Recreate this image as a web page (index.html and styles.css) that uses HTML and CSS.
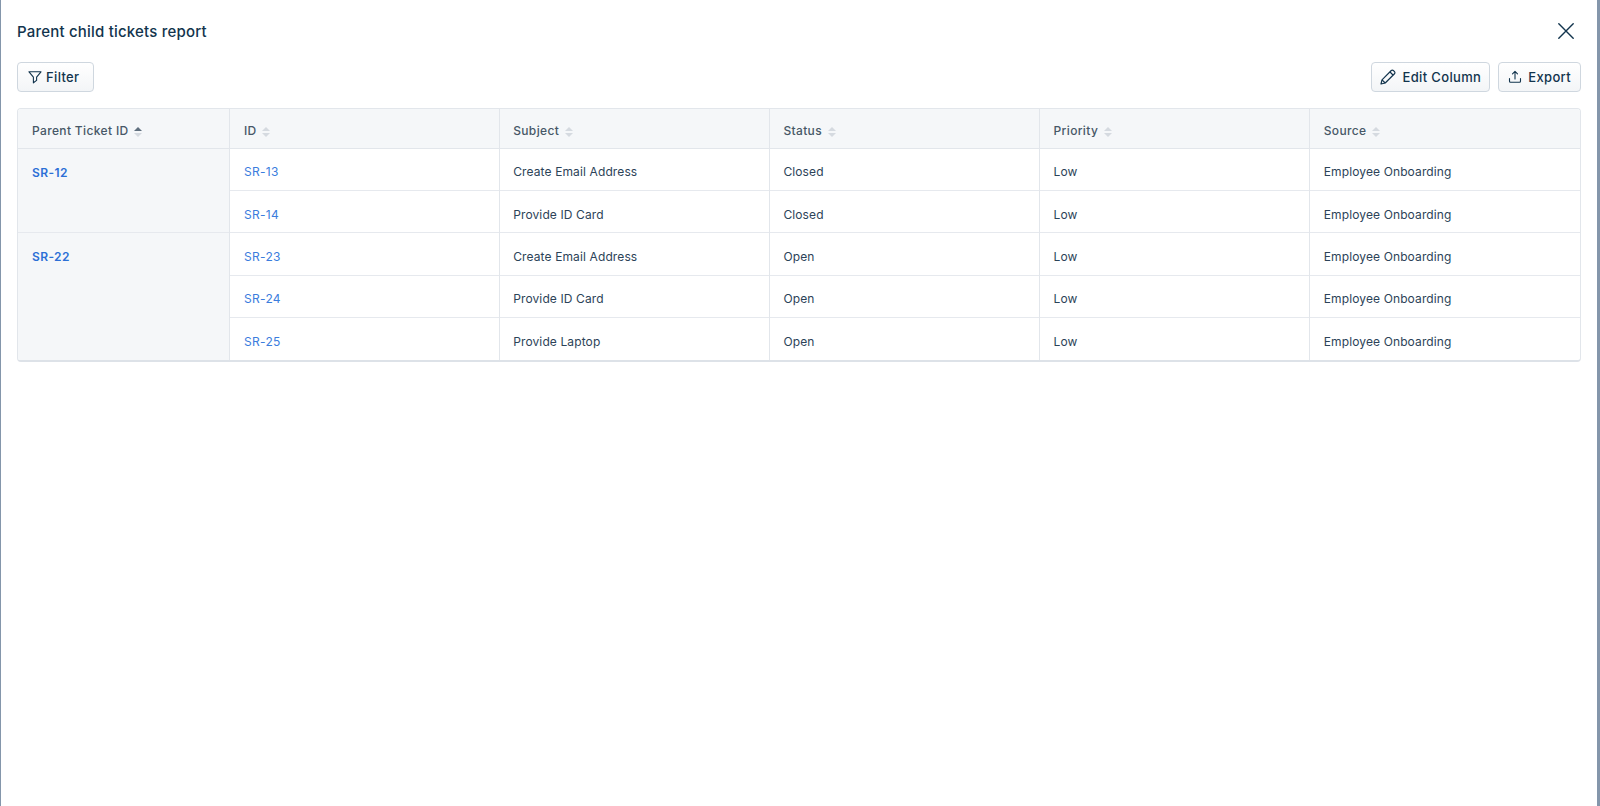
FILE: index.html
```html
<!DOCTYPE html>
<html lang="en">
<head>
<meta charset="utf-8">
<title>Parent child tickets report</title>
<link rel="stylesheet" href="styles.css">
</head>
<body>
<main class="modal">
  <header class="modal-head">
    <h1 class="title">Parent child tickets report</h1>
    <button class="close" aria-label="Close">
      <svg width="16" height="16" viewBox="0 0 16 16" fill="none" stroke="#12344d" stroke-width="1.4" stroke-linecap="round"><path d="M.8.8l14.4 14.4M15.2.8L.8 15.2"/></svg>
    </button>
  </header>
  <div class="toolbar">
    <button class="btn btn-filter">
      <svg width="14" height="14" viewBox="0 0 14 14" fill="none" stroke="#12344d" stroke-width="1.1" stroke-linejoin="round"><path d="M1 1.8h12L8.6 7.2v3.2l-3.2 2.4V7.2z"/></svg>
      Filter
    </button>
    <div class="toolbar-right">
      <button class="btn btn-edit">
        <svg width="16" height="16" viewBox="0 0 16 16" fill="none" stroke="#12344d" stroke-width="1.2" stroke-linejoin="round"><path d="M1 15l1-4.2L11.3 1.5a1.4 1.4 0 0 1 2 0l1.2 1.2a1.4 1.4 0 0 1 0 2L5.2 14z"/><path d="M10 3l3 3M2 10.8L5.2 14"/></svg>
        Edit Column
      </button>
      <button class="btn btn-export">
        <svg width="14" height="14" viewBox="0 0 14 14" fill="none" stroke="#12344d" stroke-width="1.1" stroke-linecap="round" stroke-linejoin="round"><path d="M7 9V1.5M4.5 3.8L7 1.3l2.5 2.5M1.5 8.5v2.8a1 1 0 0 0 1 1h9a1 1 0 0 0 1-1V8.5"/></svg>
        Export
      </button>
    </div>
  </div>
  <div class="table-wrap">
    <table class="report">
      <colgroup>
        <col class="col-parent"><col class="col-rest"><col class="col-rest"><col class="col-rest"><col class="col-rest"><col class="col-rest">
      </colgroup>
      <thead>
        <tr>
          <th class="first">Parent Ticket ID <span class="sort"><i class="up active"></i><i class="down"></i></span></th>
          <th class="id-col">ID <span class="sort"><i class="up"></i><i class="down"></i></span></th>
          <th>Subject <span class="sort"><i class="up"></i><i class="down"></i></span></th>
          <th>Status <span class="sort"><i class="up"></i><i class="down"></i></span></th>
          <th>Priority <span class="sort"><i class="up"></i><i class="down"></i></span></th>
          <th>Source <span class="sort"><i class="up"></i><i class="down"></i></span></th>
        </tr>
      </thead>
      <tbody>
        <tr>
          <td class="parent" rowspan="2"><a class="link strong">SR-12</a></td>
          <td class="id-col"><a class="link">SR-13</a></td><td>Create Email Address</td><td>Closed</td><td>Low</td><td>Employee Onboarding</td>
        </tr>
        <tr>
          <td class="id-col"><a class="link">SR-14</a></td><td>Provide ID Card</td><td>Closed</td><td>Low</td><td>Employee Onboarding</td>
        </tr>
        <tr>
          <td class="parent" rowspan="3"><a class="link strong">SR-22</a></td>
          <td class="id-col"><a class="link">SR-23</a></td><td>Create Email Address</td><td>Open</td><td>Low</td><td>Employee Onboarding</td>
        </tr>
        <tr>
          <td class="id-col"><a class="link">SR-24</a></td><td>Provide ID Card</td><td>Open</td><td>Low</td><td>Employee Onboarding</td>
        </tr>
        <tr>
          <td class="id-col"><a class="link">SR-25</a></td><td>Provide Laptop</td><td>Open</td><td>Low</td><td>Employee Onboarding</td>
        </tr>
      </tbody>
    </table>
  </div>
</main>
</body>
</html>
```
FILE: styles.css
```css
* { box-sizing: border-box; }
html, body { height: 100%; }
body {
  margin: 0;
  background: #8496ab;
  font-family: Inter, "Liberation Sans", sans-serif;
  color: #12344d;
  overflow: hidden;
}
.modal {
  margin: 0 3px 0 1px;
  height: 806px;
  background: #fff;
  padding: 0 16px;
  display: flex;
  flex-direction: column;
}
.modal-head {
  height: 62px;
  flex: none;
  display: flex;
  align-items: center;
  justify-content: space-between;
}
.title {
  margin: 0;
  font-size: 15px;
  font-weight: 500;
  letter-spacing: 0.2px;
  color: #12344d;
}
.close {
  border: 0;
  background: none;
  padding: 0;
  margin-right: 7px;
  display: flex;
}
.toolbar {
  flex: none;
  display: flex;
  justify-content: space-between;
  height: 30px;
  margin-bottom: 16px;
}
.toolbar-right { display: flex; gap: 8px; }
.btn {
  height: 30px;
  padding: 0 10px;
  display: flex;
  align-items: center;
  gap: 5px;
  border: 1px solid #cfd7df;
  border-radius: 4px;
  background: linear-gradient(#fff, #f3f5f7);
  font: 500 13px Inter, "Liberation Sans", sans-serif;
  letter-spacing: 0.35px;
  color: #12344d;
}
.btn-filter { padding: 0 14px 0 10px; gap: 4px; }
.btn-export { gap: 6px; padding: 0 9px; }
.btn-edit { gap: 7px; padding: 0 8px; }
.table-wrap {
  flex: none;
  border: 1px solid #e2e6eb;
  border-bottom: 2px solid #dde2e8;
  border-radius: 4px;
  overflow: hidden;
}
.report {
  width: 100%;
  border-collapse: collapse;
  table-layout: fixed;
  font-size: 12px;
  letter-spacing: 0.12px;
  color: #2c4358;
}
.col-parent { width: 211px; }
.report th, .report td {
  padding: 0 14px 0 13.5px;
  text-align: left;
  border-left: 1px solid #e2e6eb;
  border-top: 1px solid #e6e9ee;
}
.report thead th { border-top: 0; }
.report th.first, .report td.parent { border-left: 0; padding-left: 14px; }
.report th.id-col, .report td.id-col { padding-left: 14.5px; }
.report th {
  height: 39px;
  padding-top: 5px;
  background: #f5f7f9;
  font-weight: 500;
  letter-spacing: 0.35px;
  color: #475867;
  border-bottom: 1px solid #e2e6eb;
}
.report td { height: 42.4px; padding-top: 5px; }
.report td.parent {
  background: #f5f7f9;
  vertical-align: top;
  padding-top: 16px;
}
.link { color: #3b7ddd; letter-spacing: 0.3px; }
.strong { font-weight: 600; letter-spacing: 0.4px; color: #2c6fd6; }
.sort {
  display: inline-flex;
  flex-direction: column;
  gap: 2px;
  vertical-align: middle;
  margin-left: 2px;
}
.sort i {
  display: block;
  width: 0;
  height: 0;
  border-left: 4px solid transparent;
  border-right: 4px solid transparent;
}
.sort .up { border-bottom: 4px solid #d5dae0; }
.sort .down { border-top: 4px solid #d5dae0; }
.sort .up.active { border-bottom-color: #5f6f7e; }
```
